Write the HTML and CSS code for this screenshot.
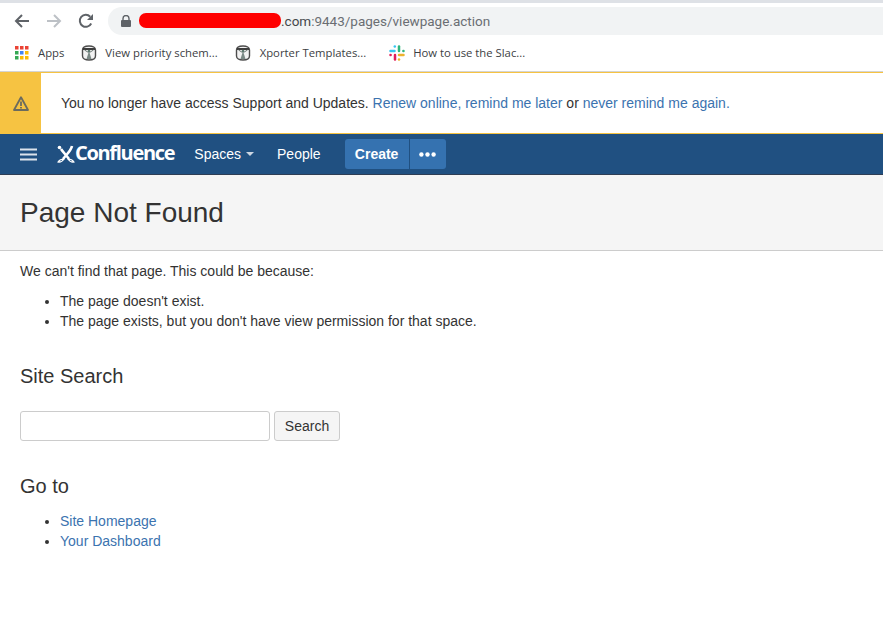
FILE: index.html
```html
<!DOCTYPE html>
<html lang="en">
<head>
<meta charset="utf-8">
<title>Page Not Found</title>
<link rel="stylesheet" href="styles.css">
</head>
<body>
<div class="topstrip"></div>
<div class="toolbar">
  <svg class="nav-icon" width="16" height="16" viewBox="0 0 16 16"><path d="M15 8H2M8 2L2 8l6 6" fill="none" stroke="#5f6368" stroke-width="2"/></svg>
  <svg class="nav-icon" width="16" height="16" viewBox="0 0 16 16"><path d="M1 8h13M8 2l6 6-6 6" fill="none" stroke="#bdc1c6" stroke-width="2"/></svg>
  <svg class="nav-icon" width="16" height="16" viewBox="0 0 16 16"><path d="M13.2 10.5A6 6 0 1 1 12.2 3.7" fill="none" stroke="#5f6368" stroke-width="2"/><path d="M15 1v6H9z" fill="#5f6368"/></svg>
  <div class="omnibox">
    <svg class="lock" width="10" height="12" viewBox="0 0 10 12"><path d="M2 5V3.500a3 3 0 0 1 6 0V5" fill="none" stroke="#5f6368" stroke-width="1.400"/><rect y="5" width="10" height="7" rx="1" fill="#5f6368"/></svg>
    <span class="redact"></span><span class="url"><span class="host">.com</span>:9443/pages/viewpage.action</span>
  </div>
</div>
<div class="bookmarks">
  <div class="bm bm-apps">
    <svg width="14" height="14" viewBox="0 0 14 14"><rect width="3.500" height="3.500" x="0" y="0" fill="#ea4335"/><rect width="3.500" height="3.500" x="5" y="0" fill="#ea4335"/><rect width="3.500" height="3.500" x="10" y="0" fill="#ea4335"/><rect width="3.500" height="3.500" x="0" y="5" fill="#34a853"/><rect width="3.500" height="3.500" x="5" y="5" fill="#4285f4"/><rect width="3.500" height="3.500" x="10" y="5" fill="#fbbc05"/><rect width="3.500" height="3.500" x="0" y="10" fill="#34a853"/><rect width="3.500" height="3.500" x="5" y="10" fill="#fbbc05"/><rect width="3.500" height="3.500" x="10" y="10" fill="#fbbc05"/></svg>
    <span>Apps</span>
  </div>
  <div class="bm bm-view">
    <svg width="16" height="16" viewBox="0 0 16 16"><path d="M1.500 5C1.500 2.500 4 1 8 1s6.500 1.500 6.500 4v6c0 2.500-2.500 4-6.500 4s-6.500-1.500-6.500-4z" fill="#f2f2f2" stroke="#4d4d4d" stroke-width="1.400"/><path d="M2 4h12" stroke="#3d3d3d" stroke-width="2"/><path d="M3.500 5l4 2.500M12.500 5l-4 2.500" stroke="#6f7a76"/><path d="M8 6l-2.500 8h5z" fill="#7b8a86"/><circle cx="8" cy="6" r="1.300" fill="#5d7a70"/></svg>
    <span>View priority schem...</span>
  </div>
  <div class="bm bm-xporter">
    <svg width="16" height="16" viewBox="0 0 16 16"><path d="M1.500 5C1.500 2.500 4 1 8 1s6.500 1.500 6.500 4v6c0 2.500-2.500 4-6.500 4s-6.500-1.500-6.500-4z" fill="#f2f2f2" stroke="#4d4d4d" stroke-width="1.400"/><path d="M2 4h12" stroke="#3d3d3d" stroke-width="2"/><path d="M3.500 5l4 2.500M12.500 5l-4 2.500" stroke="#6f7a76"/><path d="M8 6l-2.500 8h5z" fill="#7b8a86"/><circle cx="8" cy="6" r="1.300" fill="#5d7a70"/></svg>
    <span>Xporter Templates...</span>
  </div>
  <div class="bm">
    <svg width="16" height="16" viewBox="0 0 16 16"><g stroke-width="2.500" stroke-linecap="round" fill="none"><path d="M1.500 6h4" stroke="#36c5f0"/><path d="M5.800 1.500v.1" stroke="#36c5f0"/><path d="M10 1.500v4.500" stroke="#2eb67d"/><path d="M14.500 6h-.1" stroke="#2eb67d"/><path d="M10 10h4.500" stroke="#ecb22e"/><path d="M10 14.500v-.1" stroke="#ecb22e"/><path d="M6 10v4.500" stroke="#e01e5a"/><path d="M1.500 10h.1" stroke="#e01e5a"/></g></svg>
    <span>How to use the Slac...</span>
  </div>
</div>
<div class="banner">
  <div class="banner-icon">
    <svg width="16" height="15" viewBox="0 0 16 15"><path d="M8 1.200L15 14H1z" fill="none" stroke="#6b6b5e" stroke-width="1.800" stroke-linejoin="round"/><path d="M8 5.500v4.500M8 11v1.500" stroke="#6b6b5e" stroke-width="1.800"/></svg>
  </div>
  <p class="banner-text">You no longer have access Support and Updates. <a href="#">Renew online, remind me later</a> or <a href="#">never remind me again.</a></p>
</div>
<header class="appnav">
  <svg class="menu" width="17" height="13" viewBox="0 0 17 13"><path d="M0 1.500h17M0 6.500h17M0 11.500h17" stroke="#dce3ec" stroke-width="1.800"/></svg>
  <div class="logo">
    <svg width="20" height="20" viewBox="0 0 20 20"><path d="M5 5c2 3 5 6 8 10M16 2c-1 5-6 9-9 13" fill="none" stroke="#fff" stroke-width="2.600"/><circle cx="3.500" cy="3.500" r="1.800" fill="#fff"/><path d="M8 15c-2 0-4 0-6 3 2 .5 4 0 6-3zM12 15c2 0 4 0 6 3-2 .5-4 0-6-3z" fill="none" stroke="#fff" stroke-width="1.200"/></svg>
    <span>Confluence</span>
  </div>
  <a class="nav-link spaces" href="#">Spaces<i class="caret"></i></a>
  <a class="nav-link people" href="#">People</a>
  <div class="create-group">
    <a class="create" href="#">Create</a>
    <a class="more" href="#" aria-label="More"><svg width="17" height="5" viewBox="0 0 17 5"><circle cx="2.400" cy="2.500" r="2.200" fill="#fff"/><circle cx="8.500" cy="2.500" r="2.200" fill="#fff"/><circle cx="14.600" cy="2.500" r="2.200" fill="#fff"/></svg></a>
  </div>
</header>
<div class="page-head"><h1>Page Not Found</h1></div>
<main class="content">
  <p class="lead">We can't find that page. This could be because:</p>
  <ul class="reasons">
    <li>The page doesn't exist.</li>
    <li>The page exists, but you don't have view permission for that space.</li>
  </ul>
  <h2 class="search-title">Site Search</h2>
  <form class="search-form">
    <input class="search-input" type="text">
    <button class="search-btn" type="button">Search</button>
  </form>
  <h2 class="goto-title">Go to</h2>
  <ul class="links">
    <li><a href="#">Site Homepage</a></li>
    <li><a href="#">Your Dashboard</a></li>
  </ul>
</main>
</body>
</html>
```
FILE: styles.css
```css
* { box-sizing: border-box; }
html, body { margin: 0; padding: 0; }
body {
  width: 883px;
  height: 639px;
  overflow: hidden;
  background: #fff;
  font-family: "Liberation Sans", Arial, sans-serif;
  font-size: 14px;
  line-height: 20px;
  color: #333;
}
a { color: #3b73af; text-decoration: none; }
.topstrip { height: 3px; background: #dee1e6; }
.toolbar {
  height: 35px;
  display: flex;
  align-items: center;
  padding-left: 14px;
}
.nav-icon { margin-right: 16px; flex: none; }
.toolbar .nav-icon:nth-child(3) { margin-right: 14px; }
.omnibox {
  width: 775px;
  height: 28px;
  display: flex;
  align-items: center;
  background: #f1f3f4;
  border-radius: 14px 0 0 14px;
  padding-left: 13px;
  font-family: "Roboto", "Liberation Sans", sans-serif;
  font-size: 13.5px;
  color: #6a6e73;
}
.lock { flex: none; margin-right: 8px; }
.redact {
  width: 142px;
  height: 15px;
  border-radius: 7px;
  background: #f00;
}
.host { color: #44474b; }
.bookmarks {
  height: 34px;
  display: flex;
  align-items: center;
  padding-left: 15px;
  padding-bottom: 3px;
  border-bottom: 1px solid #d4d4d4;
  font-family: "Open Sans", "Liberation Sans", sans-serif;
  font-size: 11.3px;
  color: #3c4043;
}
.bm { display: flex; align-items: center; gap: 8px; }
.bm-apps { gap: 9px; margin-right: 17px; }
.bm-view { margin-right: 17px; gap: 8px; }
.bm-xporter { margin-right: 23px; gap: 9px; }
.banner {
  height: 62px;
  display: flex;
  align-items: center;
  border-top: 1px solid #f6c342;
  border-bottom: 1px solid #f6c342;
}
.banner-icon {
  width: 41px;
  align-self: stretch;
  background: #f6c342;
  display: flex;
  align-items: center;
  justify-content: center;
}
.banner-text { margin: 0 0 0 20px; }
.appnav {
  height: 41px;
  display: flex;
  align-items: center;
  background: #205081;
  border-bottom: 1px solid #2e3d54;
  padding-left: 20px;
}
.menu { flex: none; }
.logo {
  display: flex;
  align-items: center;
  margin-left: 19px;
  color: #fff;
  font-family: "Open Sans", "Liberation Sans", sans-serif;
  font-weight: 700;
  font-size: 20px;
  letter-spacing: -1.3px;
}
.logo svg { margin-right: -1px; }
.logo span { padding-bottom: 2px; }
.nav-link { color: #fff; }
.spaces { margin-left: 20px; display: flex; align-items: center; }
.caret {
  margin-left: 5px;
  border: 4px solid transparent;
  border-top-color: #ccd6e2;
  border-bottom: 0;
}
.people { margin-left: 23px; }
.create-group { display: flex; margin-left: 24px; height: 30px; }
.create, .more {
  display: flex;
  align-items: center;
  justify-content: center;
  background: #3572b0;
  color: #fff;
  font-weight: 700;
}
.create { width: 65px; border-radius: 3px 0 0 3px; border-right: 1px solid #205081; }
.more { width: 36px; border-radius: 0 3px 3px 0; }
.page-head {
  height: 76px;
  background: #f5f5f5;
  border-bottom: 1px solid #ccc;
  display: flex;
  align-items: center;
  padding: 0 20px;
}
h1 { margin: 0; font-size: 28px; font-weight: 400; line-height: 34px; color: #333; }
.content { padding: 10px 20px 0; }
.lead { margin: 0; }
ul { margin: 0; padding-left: 40px; }
.reasons { margin-top: 10px; }
h2 { margin: 0; font-size: 20px; font-weight: 400; line-height: 30px; color: #333; }
.search-title { margin-top: 30px; }
.search-form { display: flex; gap: 4px; margin-top: 20px; }
.search-input {
  width: 250px;
  height: 30px;
  border: 1px solid #ccc;
  border-radius: 3px;
  background: #fff;
}
.search-btn {
  width: 66px;
  height: 30px;
  border: 1px solid #ccc;
  border-radius: 3px;
  background: #f5f5f5;
  color: #333;
  font: inherit;
}
.goto-title { margin-top: 30px; }
.links { margin-top: 10px; }
```
